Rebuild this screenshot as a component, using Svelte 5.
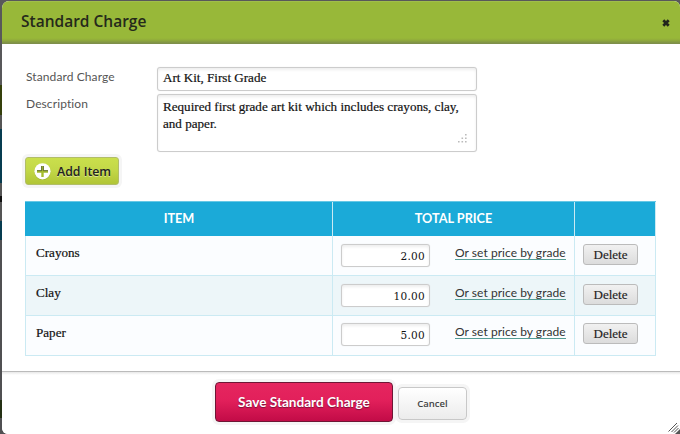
<script>
  const rows = [
    { item: 'Crayons', price: '2.00' },
    { item: 'Clay', price: '10.00' },
    { item: 'Paper', price: '5.00' }
  ];
</script>

<div class="page">
  <div class="modal">
    <header>
      <h1>Standard Charge</h1>
      <svg class="close" width="8" height="8" viewBox="0 0 8 8"><path d="M1.3 1.3 6.7 6.7M6.7 1.3 1.3 6.7" stroke="#22251c" stroke-width="2.7" /></svg>
    </header>
    <main>
      <div class="field">
        <span class="label">Standard Charge</span>
        <div class="box one">Art Kit, First Grade</div>
      </div>
      <div class="field second">
        <span class="label">Description</span>
        <div class="box area">
          Required first grade art kit which includes crayons, clay,<br />and paper.
          <svg class="grip" width="9" height="9" viewBox="0 0 9 9" fill="#bbb"><path d="M7 0h1.6v1.6H7zM3.5 3.5h1.6v1.6H3.5zM7 3.5h1.6v1.6H7zM0 7h1.6v1.6H0zM3.5 7h1.6v1.6H3.5zM7 7h1.6v1.6H7z" /></svg>
        </div>
      </div>
      <div class="add">
        <svg width="17" height="17" viewBox="0 0 17 17"><circle cx="8.5" cy="9" r="8" fill="#8b9b2e" opacity=".6" /><circle cx="8.5" cy="8.3" r="8.1" fill="#fff" /><path d="M8.5 3v11M3 8.5h11" stroke="#a5bd2e" stroke-width="2.4" /><path d="M3 7.7h4.6V3M9.4 3v4.7H14" fill="none" stroke="#4d5830" stroke-width=".8" /></svg>
        <span>Add Item</span>
      </div>
      <div class="table">
        <div class="row head"><div>ITEM</div><div>TOTAL PRICE</div><div></div></div>
        {#each rows as r}
          <div class="row data">
            <div class="name">{r.item}</div>
            <div class="price"><div class="box amount">{r.price}</div><span class="link">Or set price by grade</span></div>
            <div class="act"><div class="del">Delete</div></div>
          </div>
        {/each}
      </div>
    </main>
    <footer>
      <div class="save">Save Standard Charge</div>
      <div class="cancel">Cancel</div>
    </footer>
    <svg class="resize" width="12" height="12" viewBox="0 0 12 12"><path d="M12 7v5H7z" fill="#555" /><path d="M.5 9.5 9 1M3.5 10 10 3.5M6 10.5 10.5 6" stroke="#555" stroke-width="1" /></svg>
  </div>
</div>

<style>
  .page {
    box-sizing: border-box;
    width: 680px;
    height: 434px;
    padding: 1px 0 0 2px;
    overflow: hidden;
    background: linear-gradient(#58585a 0 85px, #35400c 85px 115px, #555 115px 129px, #073c50 129px 183px, #555 183px 196px, #111 196px 202px, #555 202px 221px, #073c50 221px 240px, #505052 240px 400px, #243014 400px 418px, #505052 418px);
    font-family: Lato, sans-serif;
    color: #222;
    white-space: nowrap;
  }
  .modal {
    position: relative;
    height: 433px;
    box-sizing: border-box;
    border-radius: 7px 6px 0 6px;
    background: #fff;
    overflow: hidden;
  }
  header {
    height: 43px;
    box-sizing: border-box;
    display: flex;
    align-items: center;
    justify-content: space-between;
    padding: 0 10px 4px 19px;
    border-top: 1px solid #a0be4a;
    background: linear-gradient(#98b839 0 36px, #91ac3b 38px, #7f9148 41px, #7a8852 43px);
  }
  h1 { margin: 0; font: 600 15.5px/20px "Open Sans", sans-serif; color: #25291b; }
  .close { display: block; margin-top: 3px; }
  main { height: 327px; box-sizing: border-box; padding: 23px 23px 0; }
  .field { display: flex; }
  .second { margin-top: 3px; }
  .label { box-sizing: border-box; width: 132px; padding-left: 1px; font-size: 12px; line-height: 20px; letter-spacing: 0.1px; color: #555; }
  .box {
    box-sizing: border-box;
    border: 1px solid #ccc;
    border-radius: 3px;
    background: #fff;
    box-shadow: inset 0 2px 3px #eee, 0 0 1px #ddd;
    color: #111;
    font-family: "Liberation Serif", serif;
    font-size: 13.1px;
    -webkit-text-stroke: 0.2px #111;
  }
  .one { width: 320px; height: 24px; padding-left: 5px; line-height: 20px; }
  .area { position: relative; width: 320px; height: 58px; padding: 3px 5px; line-height: 17px; }
  .grip { position: absolute; right: 9px; bottom: 8px; }
  .add {
    width: 94px;
    height: 28px;
    margin-top: 5px;
    box-sizing: border-box;
    display: flex;
    align-items: center;
    gap: 6px;
    padding-left: 8px;
    border: 1px solid #b1bd69;
    border-radius: 3px;
    background: linear-gradient(#cadf4c, #c3d848 45%, #b1c536);
    box-shadow: 0 0 0 3px #f5f5f5;
    font: 600 12.3px/20px "Open Sans", sans-serif;
    text-shadow: 0 1px 0 #dce693;
  }
  .add span { padding-top: 1px; }
  .table { width: 631px; margin-top: 16px; }
  .row { display: grid; grid-template-columns: 308px 242px 81px; box-sizing: border-box; height: 40px; }
  .row > div { box-sizing: border-box; border-right: 1px solid #cbeaf3; border-bottom: 1px solid #cbeaf3; }
  .row > div:first-child { border-left: 1px solid #cbeaf3; }
  .data { background: #fbfdff; }
  .data:nth-child(3) { background: #edf6f9; }
  .head { height: 35px; background: #1baad8; color: #fff; border-top: 1px solid #67c8e5; font-weight: 700; font-size: 12.7px; line-height: 33px; text-align: center; }
  .row.head > div { border-bottom: 0; }
  .row.head > div:first-child { border-left-color: #1baad8; }
  .name { padding: 7px 0 0 10px; font: 13.1px/20px "Liberation Serif", serif; color: #111; -webkit-text-stroke: 0.2px #111; }
  .price { display: flex; padding: 8px 0 0 8px; }
  .amount { width: 89px; height: 23px; padding-right: 4px; font: 10.5px/22px "DejaVu Serif", serif; letter-spacing: 0.3px; text-align: right; -webkit-text-stroke: 0; }
  .link { height: 14px; margin: 1px 0 0 25px; font-size: 12px; line-height: 15px; letter-spacing: 0.05px; color: #333; border-bottom: 1px solid #559c95; }
  .act { padding: 8px 0 0 8px; }
  .data:last-child .price, .data:last-child .act { padding-top: 7px; }
  .del {
    width: 55px;
    height: 21px;
    box-sizing: border-box;
    border: 1px solid #bbb;
    border-radius: 3px;
    background: linear-gradient(#f1f1f1, #dcdcdc);
    font: 13px/19px "Liberation Serif", serif;
    text-align: center;
    -webkit-text-stroke: 0.15px #222;
  }
  footer {
    height: 63px;
    box-sizing: border-box;
    display: flex;
    align-items: flex-start;
    gap: 5px;
    padding: 10px 0 0 213px;
    border-top: 1px solid #bbb;
    background: linear-gradient(#e8e8e8, #fff 3px);
  }
  .save {
    width: 178px;
    height: 40px;
    box-sizing: border-box;
    border: 1px solid #6d1735;
    border-radius: 4px;
    background: linear-gradient(#e5265f, #e2205b 45%, #c20b47);
    box-shadow: 0 0 0 3px #f5f5f5;
    color: #fff;
    font-weight: 700;
    font-size: 13.6px;
    line-height: 38px;
    text-align: center;
    text-shadow: 0 1px 1px #7b1239;
  }
  .cancel {
    width: 69px;
    height: 33px;
    margin-top: 5px;
    box-sizing: border-box;
    border: 1px solid #c8c8c8;
    border-radius: 4px;
    background: linear-gradient(#fff, #ececec);
    box-shadow: 0 0 0 3px #f5f5f5;
    font: 600 9.5px/31px "Open Sans", sans-serif;
    color: #444;
    text-align: center;
  }
  .resize { position: absolute; right: 0; bottom: 0; }
</style>
